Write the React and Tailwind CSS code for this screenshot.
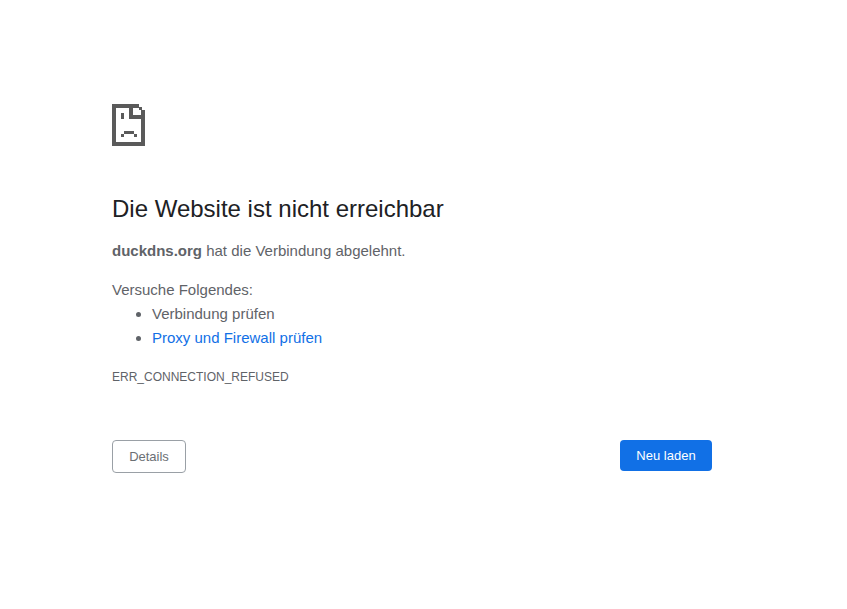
export default function App() {
  return (
    <div className="min-h-[609px] bg-white pt-[104px] pl-[112px] w-[712px] text-[15px] leading-[24px] text-[#5f6368]" style={{ fontFamily: '"Liberation Sans", Arial, sans-serif' }}>
      <svg width="33" height="42" viewBox="0 0 33 42" className="block" fill="#5a5a5a" shapeRendering="crispEdges">
        <rect x="0" y="0" width="27" height="4" />
        <rect x="0" y="0" width="4" height="42" />
        <rect x="0" y="38" width="33" height="4" />
        <rect x="29" y="6" width="4" height="36" />
        <rect x="17" y="0" width="4" height="15" />
        <rect x="17" y="11" width="16" height="4" />
        <rect x="27" y="3" width="3" height="3" />
        <rect x="9" y="9" width="3" height="6" />
        <rect x="12" y="27" width="10" height="3" />
        <rect x="9" y="30" width="3" height="3" />
        <rect x="22" y="30" width="3" height="3" />
      </svg>
      <h1 className="mt-[49px] text-[24px] leading-[28px] font-normal text-[#202124]">Die Website ist nicht erreichbar</h1>
      <p className="mt-[16px]"><strong className="font-bold">duckdns.org</strong> hat die Verbindung abgelehnt.</p>
      <p className="mt-[15px]">Versuche Folgendes:</p>
      <ul className="list-disc pl-[40px]">
        <li>Verbindung prüfen</li>
        <li><a className="text-[#1170e6]">Proxy und Firewall prüfen</a></li>
      </ul>
      <div className="mt-[15px] text-[12px] leading-[24px] uppercase">ERR_CONNECTION_REFUSED</div>
      <div className="mt-[51px] flex justify-between items-start">
        <button className="h-[33px] w-[74px] rounded-[4px] border border-[#9aa0a6] bg-white text-[13px] text-[#6b6f74]">Details</button>
        <button className="h-[31px] w-[92px] rounded-[4px] bg-[#1170e6] text-[13px] text-white">Neu laden</button>
      </div>
    </div>
  );
}
